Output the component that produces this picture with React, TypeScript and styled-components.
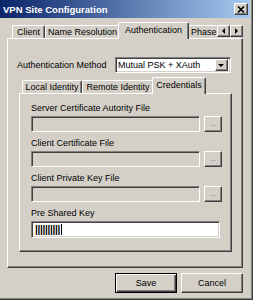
import styled, { createGlobalStyle } from 'styled-components';

const Global = createGlobalStyle`
  html, body { margin: 0; padding: 0; background: #ffffff; }
  body {
    font-family: "Liberation Sans", Arial, sans-serif;
    font-size: 9px;
    color: #000;
  }
  * { box-sizing: border-box; }
`;

const raised = `
  background: #d4d0c8;
  border: 1px solid;
  border-color: #ffffff #404040 #404040 #ffffff;
  box-shadow: inset -1px -1px #808080;
`;

const sunken = `
  border: 1px solid;
  border-color: #808080 #ffffff #ffffff #808080;
  box-shadow: inset 1px 1px #404040, inset -1px -1px #d4d0c8;
`;

const S = {
  Window: styled.div`
    width: 253px;
    height: 300px;
    background: #d4d0c8;
    border-right: 1px solid #404040;
    border-bottom: 1px solid #404040;
    box-shadow: inset -1px -1px #808080;
    display: flex;
    flex-direction: column;
  `,
  TitleBar: styled.div`
    height: 18px;
    margin-right: 2px;
    padding: 0 2px 0 3px;
    display: flex;
    align-items: center;
    justify-content: space-between;
    background: linear-gradient(to right, #0a246a, #a6caf0);
  `,
  Title: styled.span`
    color: #fff;
    font-weight: 700;
    font-size: 9.5px;
  `,
  CloseButton: styled.div`
    ${raised}
    width: 14px;
    height: 12px;
    display: flex;
    align-items: center;
    justify-content: center;
  `,
  Body: styled.div`
    display: flex;
    flex-direction: column;
    padding: 0 9px 0 7px;
  `,
  TabStrip: styled.div<{ $indent: number }>`
    height: 20px;
    display: flex;
    align-items: flex-end;
    padding-left: ${(p) => p.$indent}px;
  `,
  Tab: styled.div<{ $width: number; $active?: boolean }>`
    width: ${(p) => p.$width + (p.$active ? 4 : 0)}px;
    height: ${(p) => (p.$active ? 17 : 13)}px;
    margin: 0 ${(p) => (p.$active ? -2 : 0)}px ${(p) => (p.$active ? -1 : 0)}px;
    position: relative;
    z-index: ${(p) => (p.$active ? 1 : 0)};
    background: #d4d0c8;
    border-top: 1px solid #ffffff;
    border-left: 1px solid #ffffff;
    border-right: 1px solid #404040;
    border-radius: 2px 2px 0 0;
    box-shadow: inset -1px 0 #808080;
    display: flex;
    align-items: center;
    justify-content: center;
    padding-bottom: ${(p) => (p.$active ? 2 : 0)}px;
    white-space: nowrap;
    overflow: hidden;
  `,
  ClippedTab: styled.div`
    width: 29px;
    height: 13px;
    background: #d4d0c8;
    border-top: 1px solid #ffffff;
    border-left: 1px solid #ffffff;
    border-radius: 2px 0 0 0;
    padding-left: 3px;
    display: flex;
    align-items: center;
    white-space: nowrap;
  `,
  Scroller: styled.div`
    display: flex;
    margin-left: auto;
    margin-bottom: 1px;
  `,
  ScrollButton: styled.div`
    ${raised}
    width: 13px;
    height: 12px;
    display: flex;
    align-items: center;
    justify-content: center;
  `,
  Panel: styled.div<{ $height?: number; $padding: string }>`
    ${(p) => (p.$height ? `height: ${p.$height}px;` : 'flex: 1;')}
    padding: ${(p) => p.$padding};
    border: 1px solid;
    border-color: #ffffff #404040 #404040 #ffffff;
    box-shadow: inset -1px -1px #808080;
    display: flex;
    flex-direction: column;
  `,
  MethodRow: styled.div`
    display: flex;
    align-items: center;
    height: 16px;
  `,
  MethodLabel: styled.span`
    width: 98px;
    margin-left: -2px;
  `,
  Select: styled.div`
    ${sunken}
    width: 116px;
    height: 16px;
    background: #fff;
    display: flex;
    align-items: center;
    padding: 0 2px 0 2px;
  `,
  SelectValue: styled.span`
    flex: 1;
    white-space: nowrap;
  `,
  DropButton: styled.div`
    ${raised}
    width: 13px;
    height: 12px;
    display: flex;
    align-items: center;
    justify-content: center;
  `,
  Form: styled.div`
    display: flex;
    flex-direction: column;
    gap: 6px;
  `,
  Group: styled.div`
    display: flex;
    flex-direction: column;
    gap: 2px;
  `,
  Label: styled.span`
    line-height: 11px;
    white-space: nowrap;
  `,
  FieldRow: styled.div`
    display: flex;
    gap: 4px;
  `,
  Field: styled.div<{ $editable?: boolean }>`
    ${sunken}
    flex: 1;
    background: ${(p) => (p.$editable ? '#ffffff' : '#d4d0c8')};
    margin-right: ${(p) => (p.$editable ? 2 : 0)}px;
    display: flex;
    align-items: center;
    padding-left: 3px;
    height: ${(p) => (p.$editable ? 17 : 16)}px;
  `,
  Bars: styled.span`
    font-weight: 700;
    font-size: 10px;
    line-height: 10px;
    letter-spacing: -0.3px;
  `,
  Caret: styled.span`
    width: 1px;
    height: 11px;
    margin-left: 1px;
    background: #000;
  `,
  BrowseButton: styled.div`
    ${raised}
    width: 18px;
    height: 16px;
    color: #808080;
    font-size: 8px;
    display: flex;
    align-items: flex-end;
    justify-content: center;
    padding-bottom: 3px;
    letter-spacing: -0.5px;
  `,
  ButtonRow: styled.div`
    display: flex;
    justify-content: flex-end;
    gap: 4px;
    margin-top: 5px;
  `,
  Button: styled.div<{ $default?: boolean }>`
    width: 62px;
    height: 20px;
    background: #d4d0c8;
    display: flex;
    align-items: center;
    justify-content: center;
    font-size: 9px;
    border: 1px solid;
    border-color: ${(p) => (p.$default ? '#000' : '#ffffff #404040 #404040 #ffffff')};
    box-shadow: ${(p) =>
      p.$default
        ? 'inset 1px 1px #ffffff, inset -1px -1px #404040, inset -2px -2px #808080'
        : 'inset -1px -1px #808080'};
  `,
};

const Triangle = ({ dir }: { dir: 'left' | 'right' | 'down' }) => {
  const points =
    dir === 'left' ? '4,0 4,6 1,3' : dir === 'right' ? '1,0 1,6 4,3' : '0,1 6,1 3,4';
  const w = dir === 'down' ? 7 : 5;
  const h = dir === 'down' ? 5 : 7;
  return (
    <svg width={w} height={h} viewBox={`0 0 ${w} ${h}`}>
      <polygon points={points} fill="#000" />
    </svg>
  );
};

const fileFields = [
  'Server Certificate Autority File',
  'Client Certificate File',
  'Client Private Key File',
];

const App = () => (
  <>
    <Global />
    <S.Window>
      <S.TitleBar>
        <S.Title>VPN Site Configuration</S.Title>
        <S.CloseButton>
          <svg width="8" height="7" viewBox="0 0 8 7">
            <path d="M1 0.5 L7 6.5 M7 0.5 L1 6.5" stroke="#000" strokeWidth="1.6" />
          </svg>
        </S.CloseButton>
      </S.TitleBar>
      <S.Body>
        <S.TabStrip $indent={5}>
          <S.Tab $width={33}>Client</S.Tab>
          <S.Tab $width={75}>Name Resolution</S.Tab>
          <S.Tab $width={67} $active>
            Authentication
          </S.Tab>
          <S.ClippedTab>Phase</S.ClippedTab>
          <S.Scroller>
            <S.ScrollButton>
              <Triangle dir="left" />
            </S.ScrollButton>
            <S.ScrollButton>
              <Triangle dir="right" />
            </S.ScrollButton>
          </S.Scroller>
        </S.TabStrip>
        <S.Panel $height={230} $padding="18px 10px 15px 11px">
          <S.MethodRow>
            <S.MethodLabel>Authentication Method</S.MethodLabel>
            <S.Select>
              <S.SelectValue>Mutual PSK + XAuth</S.SelectValue>
              <S.DropButton>
                <Triangle dir="down" />
              </S.DropButton>
            </S.Select>
          </S.MethodRow>
          <S.TabStrip $indent={3}>
            <S.Tab $width={60}>Local Identity</S.Tab>
            <S.Tab $width={72}>Remote Identity</S.Tab>
            <S.Tab $width={50} $active>
              Credentials
            </S.Tab>
          </S.TabStrip>
          <S.Panel $padding="9px 9px 0 11px">
            <S.Form>
              {fileFields.map((label) => (
                <S.Group key={label}>
                  <S.Label>{label}</S.Label>
                  <S.FieldRow>
                    <S.Field />
                    <S.BrowseButton>...</S.BrowseButton>
                  </S.FieldRow>
                </S.Group>
              ))}
              <S.Group>
                <S.Label>Pre Shared Key</S.Label>
                <S.FieldRow>
                  <S.Field $editable>
                    <S.Bars>||||||||||</S.Bars>
                    <S.Caret />
                  </S.Field>
                </S.FieldRow>
              </S.Group>
            </S.Form>
          </S.Panel>
        </S.Panel>
        <S.ButtonRow>
          <S.Button $default>Save</S.Button>
          <S.Button>Cancel</S.Button>
        </S.ButtonRow>
      </S.Body>
    </S.Window>
  </>
);

export default App;
